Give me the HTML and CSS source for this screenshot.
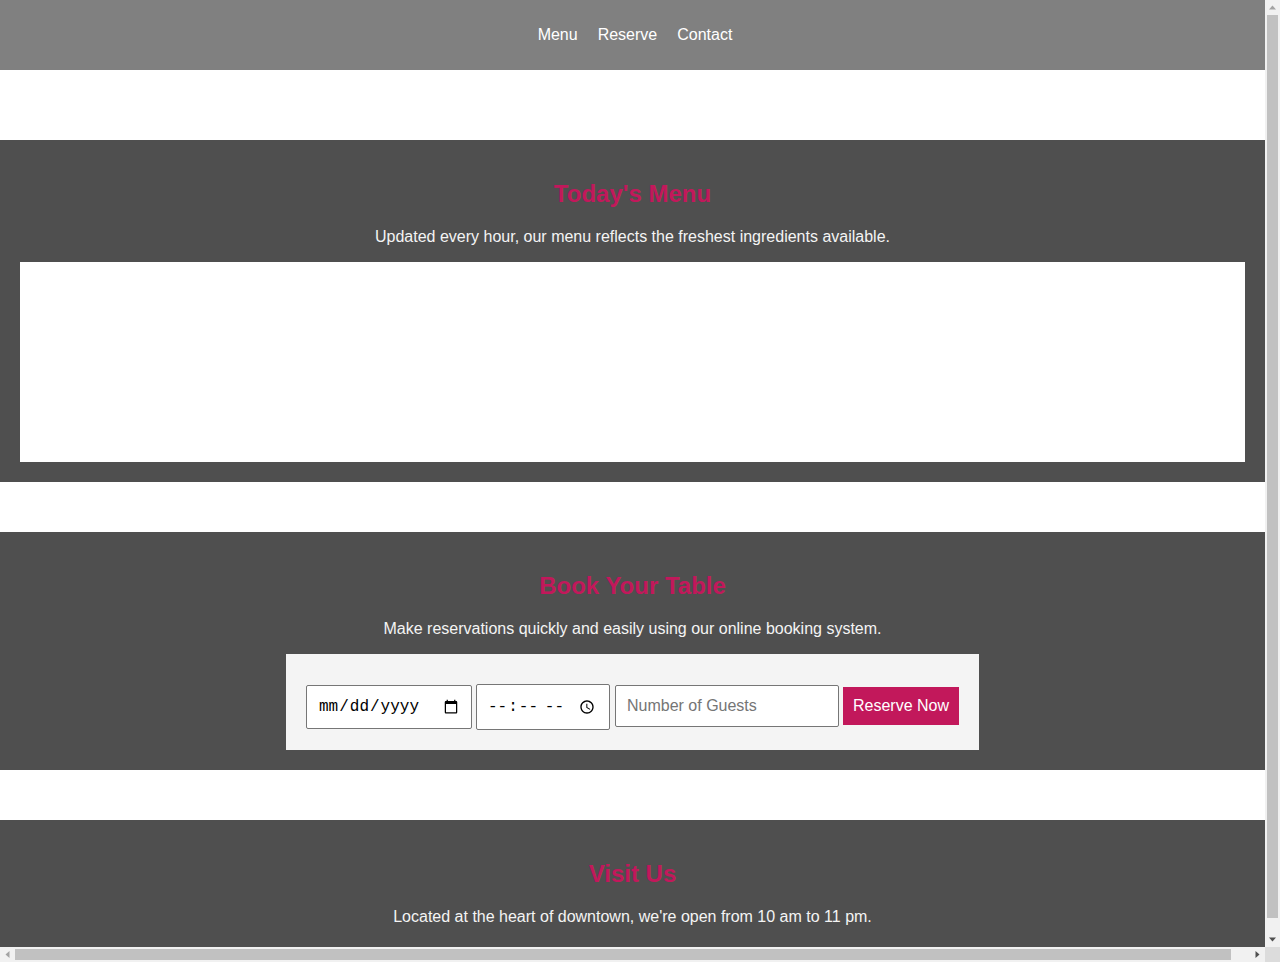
FILE: index.html
```html
<!DOCTYPE html>
<html lang="en">
<head>
<meta charset="utf-8">
<title>Restaurant</title>
<link rel="stylesheet" href="styles.css">
</head>
<body>
<div class="screen">
  <div class="viewport">
    <header class="site-header">
      <nav class="nav">
        <a class="nav-link" href="#menu">Menu</a>
        <a class="nav-link" href="#reserve">Reserve</a>
        <a class="nav-link" href="#contact">Contact</a>
      </nav>
    </header>
    <main class="main">
      <section class="section" id="menu">
        <h2 class="section-title">Today's Menu</h2>
        <p class="section-text">Updated every hour, our menu reflects the freshest ingredients available.</p>
        <div class="menu-frame"></div>
      </section>
      <section class="section" id="reserve">
        <h2 class="section-title">Book Your Table</h2>
        <p class="section-text">Make reservations quickly and easily using our online booking system.</p>
        <form class="booking-form">
          <input class="field field-date" type="date">
          <input class="field field-time" type="time">
          <input class="field field-text" type="text" placeholder="Number of Guests">
          <button class="reserve-btn" type="button">Reserve Now</button>
        </form>
      </section>
      <section class="section" id="contact">
        <h2 class="section-title">Visit Us</h2>
        <p class="section-text">Located at the heart of downtown, we're open from 10 am to 11 pm.</p>
      </section>
    </main>
  </div>
  <div class="vscroll">
    <div class="sb-btn"><svg width="15" height="15" viewBox="0 0 15 15"><path d="M4 9.5 L7.5 5.5 L11 9.5 Z" fill="#a3a3a3"/></svg></div>
    <div class="sb-track sb-track-v"><div class="sb-thumb sb-thumb-v"></div></div>
    <div class="sb-btn"><svg width="15" height="15" viewBox="0 0 15 15"><path d="M4 5.5 L11 5.5 L7.5 9.5 Z" fill="#505050"/></svg></div>
  </div>
  <div class="hscroll">
    <div class="sb-btn"><svg width="15" height="15" viewBox="0 0 15 15"><path d="M9.5 4 L9.5 11 L5.5 7.5 Z" fill="#a3a3a3"/></svg></div>
    <div class="sb-track sb-track-h"><div class="sb-thumb sb-thumb-h"></div></div>
    <div class="sb-btn"><svg width="15" height="15" viewBox="0 0 15 15"><path d="M5.5 4 L5.5 11 L9.5 7.5 Z" fill="#505050"/></svg></div>
  </div>
  <div class="sb-corner"></div>
</div>
</body>
</html>
```
FILE: styles.css
```css
html, body {
  margin: 0;
  padding: 0;
  height: 100%;
  overflow: hidden;
}
body {
  font-family: "Liberation Sans", Arial, sans-serif;
  font-size: 16px;
  background: #ffffff;
}
.screen {
  display: grid;
  grid-template-columns: 1fr 15px;
  grid-template-rows: 1fr 15px;
  height: 100vh;
  width: 100vw;
}
.viewport {
  overflow: hidden;
  min-width: 0;
  min-height: 0;
}
.vscroll {
  background: #f1f1f1;
  display: flex;
  flex-direction: column;
}
.hscroll {
  background: #f1f1f1;
  display: flex;
  flex-direction: row;
}
.sb-btn {
  width: 15px;
  height: 15px;
  flex: 0 0 15px;
}
.sb-btn svg {
  display: block;
}
.sb-track {
  flex: 1 1 auto;
  display: flex;
}
.sb-track-v {
  flex-direction: column;
  padding: 0 2px;
}
.sb-track-h {
  flex-direction: row;
  padding: 2px 0;
}
.sb-thumb {
  background: #c1c1c1;
}
.sb-thumb-v {
  height: 903px;
}
.sb-thumb-h {
  width: 1216px;
}
.sb-corner {
  background: #dcdcdc;
}
.site-header {
  box-sizing: content-box;
  width: 100%;
  padding-right: 20px;
  height: 70px;
  background: #808080;
  display: flex;
  align-items: center;
}
.nav {
  flex: 0 0 100%;
  display: flex;
  justify-content: center;
  padding-left: 5px;
  box-sizing: border-box;
}
.nav-link {
  color: #ffffff;
  text-decoration: none;
  margin: 0 10px;
}
.main {
  display: flex;
  flex-direction: column;
  gap: 50px;
  padding-top: 70px;
}
.section {
  background: #4f4f4f;
  padding: 20px;
  text-align: center;
  color: #f4f4f4;
}
.section-title {
  color: #c2185b;
  font-size: 24px;
  font-weight: bold;
  margin: 20px 0;
  line-height: 28px;
}
.section-text {
  margin: 0 0 16px;
  line-height: 18px;
}
.menu-frame {
  background: #ffffff;
  height: 200px;
  width: 100%;
}
.booking-form {
  display: inline-flex;
  align-items: flex-start;
  gap: 4px;
  background: #f4f4f4;
  padding: 30px 20px 20px;
  height: 96px;
  box-sizing: border-box;
}
.field {
  font-size: 16px;
  padding: 0 10px;
  border: 1px solid #767676;
  border-radius: 2px;
  background: #ffffff;
  color: #000000;
  box-sizing: border-box;
  margin: 0;
}
.field-date,
.field-time {
  font-family: "Liberation Mono", "Courier New", monospace;
}
.field-date {
  width: 166px;
  height: 44px;
  margin-top: 1px;
  padding-left: 11px;
}
.field-time {
  width: 134px;
  height: 46px;
  margin-right: 1px;
}
.field-text {
  font-family: "Liberation Sans", Arial, sans-serif;
  width: 224px;
  height: 42px;
  margin-top: 1px;
  padding: 0 11px;
}
.field-text::placeholder {
  color: #757575;
}
.reserve-btn {
  font-family: "Liberation Sans", Arial, sans-serif;
  font-size: 16px;
  padding: 0 10px;
  height: 38px;
  min-width: 116px;
  white-space: nowrap;
  margin-top: 3px;
  border: none;
  background: #c2185b;
  color: #ffffff;
}
```
